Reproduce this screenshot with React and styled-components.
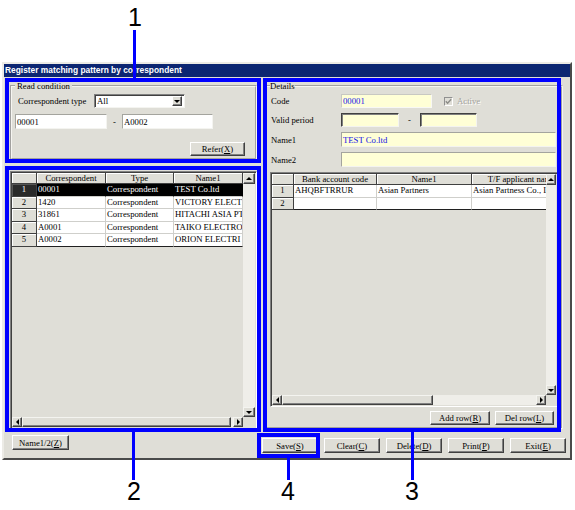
import styled, { createGlobalStyle } from "styled-components";

const FACE = "#dfded7";
const SERIF = `"Liberation Serif", "Times New Roman", serif`;
const SANS = `"Liberation Sans", Arial, sans-serif`;
const BLUE = "#0000ff";
const CREAM = "#ffffd6";

const GlobalStyle = createGlobalStyle`
  html, body { margin: 0; padding: 0; background: #fff; }
  *, *::before, *::after { box-sizing: border-box; }
`;

const leftCols = [
    { w: 25, label: "" },
    { w: 69, label: "Correspondent" },
    { w: 68, label: "Type" },
    { w: 69, label: "Name1" },
];

const leftRows = [
    ["00001", "Correspondent", "TEST Co.ltd"],
    ["1420", "Correspondent", "VICTORY ELECTRIC CO."],
    ["31861", "Correspondent", "HITACHI ASIA PTE"],
    ["A0001", "Correspondent", "TAIKO ELECTRONICS"],
    ["A0002", "Correspondent", "ORION ELECTRI CO."],
];

const rightCols = [
    { w: 22, label: "" },
    { w: 83, label: "Bank account code" },
    { w: 95, label: "Name1" },
    { w: 100, label: "T/F applicant name" },
];

const rightRows = [
    ["AHQBFTRRUR", "Asian Partners", "Asian Partness Co., Ltd"],
    ["", "", ""],
];

export default function App() {
    return (
        <>
            <GlobalStyle />
            <Canvas>
                <Window>
                    <TitleBar>Register matching pattern by correspondent</TitleBar>
                    <Body>
                        <LeftCol>
                            <Group $h={79} $pad="3px 10px 2px 3px">
                                <Legend $pl={2}>Read condition</Legend>
                                <Line $h={14}>
                                    <Label $w={79} $pl={3}>Correspondent type</Label>
                                    <Select>
                                        <span>All</span>
                                        <DropBtn>
                                            <Tri $dir="down" />
                                        </DropBtn>
                                    </Select>
                                </Line>
                                <Line $h={15} $mt={6}>
                                    <TextBox $w={92}>00001</TextBox>
                                    <Dash $w={15}>-</Dash>
                                    <TextBox $w={91}>A0002</TextBox>
                                </Line>
                                <Line $h={14} $mt={13} $end>
                                    <Button $w={55} $h={14}>
                                        Refer(<u>X</u>)
                                    </Button>
                                </Line>
                            </Group>
                            <DataGrid
                                cols={leftCols}
                                rows={leftRows}
                                selected={0}
                                height={258}
                                sb={12}
                                thumb={209}
                            />
                        </LeftCol>

                        <Group $h={348} $pad="3px 3px 2px 4px">
                            <Legend $pl={0}>Details</Legend>
                            <Form>
                                <Line $h={14}>
                                    <Label $w={71} $pl={1}>Code</Label>
                                    <TextBox $w={91} $kind="flat" $bg={CREAM} $color="#1414e6">
                                        00001
                                    </TextBox>
                                    <Check>
                                        <CheckBox>
                                            <svg width="7" height="7" viewBox="0 0 7 7">
                                                <polyline
                                                    points="0.8,3.2 2.6,5.2 6.2,1.2"
                                                    fill="none"
                                                    stroke="#8c8c88"
                                                    strokeWidth="1.4"
                                                />
                                            </svg>
                                        </CheckBox>
                                        <span>Active</span>
                                    </Check>
                                </Line>
                                <Line $h={14}>
                                    <Label $w={71} $pl={1}>Valid period</Label>
                                    <TextBox $w={58} $kind="deep" $bg={CREAM} />
                                    <Dash $w={21}>-</Dash>
                                    <TextBox $w={57} $kind="deep" $bg={CREAM} />
                                </Line>
                                <Line $h={15}>
                                    <Label $w={71} $pl={1}>Name1</Label>
                                    <TextBox $w={215} $bg={CREAM} $color="#1414e6">
                                        TEST Co.ltd
                                    </TextBox>
                                </Line>
                                <Line $h={15}>
                                    <Label $w={71} $pl={1}>Name2</Label>
                                    <TextBox $w={215} $bg={CREAM} />
                                </Line>
                            </Form>
                            <Spacer $h={5} />
                            <DataGrid
                                cols={rightCols}
                                rows={rightRows}
                                selected={-1}
                                height={235}
                                sb={10}
                                thumb={151}
                            />
                            <Line $h={14} $mt={4} $end $gap={5} $pr={4}>
                                <Button $w={60} $h={14}>
                                    Add row(<u>R</u>)
                                </Button>
                                <Button $w={59} $h={14}>
                                    Del row(<u>L</u>)
                                </Button>
                            </Line>
                        </Group>

                        <FootLeft>
                            <Button $w={57} $h={15}>
                                Name1/2(<u>Z</u>)
                            </Button>
                        </FootLeft>
                        <FootRight>
                            <Button $w={56} $h={15}>Save(<u>S</u>)</Button>
                            <Button $w={56} $h={15}>Clear(<u>C</u>)</Button>
                            <Button $w={56} $h={15}>Delete(<u>D</u>)</Button>
                            <Button $w={56} $h={15}>Print(<u>P</u>)</Button>
                            <Button $w={56} $h={15}>Exit(<u>E</u>)</Button>
                        </FootRight>
                    </Body>
                </Window>

                {/* callouts drawn over the screenshot */}
                <Frame $x={5} $y={78} $w={256} $h={85} />
                <Frame $x={5} $y={166} $w={256} $h={266} />
                <Frame $x={263} $y={78} $w={298} $h={354} />
                <Frame $x={257} $y={433} $w={63} $h={25} />
                <Leader $x={133} $y={30} $h={48} />
                <Leader $x={132} $y={432} $h={48} />
                <Leader $x={411} $y={432} $h={48} />
                <Leader $x={287} $y={458} $h={22} />
                <Callout $x={125} $y={5}>1</Callout>
                <Callout $x={124} $y={479}>2</Callout>
                <Callout $x={402} $y={479}>3</Callout>
                <Callout $x={278} $y={479}>4</Callout>
            </Canvas>
        </>
    );
}

function DataGrid({ cols, rows, selected, height, sb, thumb }) {
    return (
        <GridFrame $h={height} $sb={sb}>
            <TableArea>
                <HeadRow>
                    {cols.map((c, i) => (
                        <HeadCell key={i} $w={c.w}>
                            {c.label}
                        </HeadCell>
                    ))}
                </HeadRow>
                {rows.map((r, ri) => {
                    const sel = ri === selected;
                    const last = ri === rows.length - 1;
                    return (
                        <DataRow key={ri}>
                            <RowHead $w={cols[0].w} $sel={sel} $last={last}>
                                {ri + 1}
                            </RowHead>
                            {r.map((v, ci) => (
                                <DataCell key={ci} $w={cols[ci + 1].w} $sel={sel} $last={last}>
                                    {v}
                                </DataCell>
                            ))}
                        </DataRow>
                    );
                })}
            </TableArea>
            <VScroll>
                <ArrowBtn $h={11}>
                    <Tri $dir="up" />
                </ArrowBtn>
                <Track />
                <ArrowBtn $h={10}>
                    <Tri $dir="down" />
                </ArrowBtn>
            </VScroll>
            <HScroll>
                <ArrowBtn $w={10}>
                    <Tri $dir="left" />
                </ArrowBtn>
                <Thumb $w={thumb} />
                <Track />
                <ArrowBtn $w={10}>
                    <Tri $dir="right" />
                </ArrowBtn>
            </HScroll>
            <Corner />
        </GridFrame>
    );
}

const Canvas = styled.div`
    position: relative;
    width: 575px;
    height: 510px;
    padding: 62px 0 0 2px;
    overflow: hidden;
    background: #fff;
`;

const Window = styled.div`
    width: 570px;
    height: 398px;
    display: flex;
    flex-direction: column;
    background: ${FACE};
    border: 2px solid;
    border-color: #ecebe6 #4a4a4a #4a4a4a #ecebe6;
    font-family: ${SERIF};
    font-size: 8.7px;
    color: #000;
`;

const TitleBar = styled.div`
    flex: 0 0 13px;
    height: 13px;
    padding-left: 1px;
    background: #0c2672;
    color: #fff;
    font: bold 8.4px/13px ${SANS};
    white-space: nowrap;
`;

const Body = styled.div`
    flex: 1;
    display: grid;
    grid-template-columns: 247px 299px;
    grid-template-rows: 348px 1fr;
    column-gap: 7px;
    row-gap: 6px;
    padding: 4px 0 0 6px;
`;

const LeftCol = styled.div`
    display: flex;
    flex-direction: column;
    gap: 11px;
`;

const Group = styled.fieldset`
    margin: 0;
    min-width: 0;
    height: ${(p) => p.$h}px;
    padding: ${(p) => p.$pad};
    border: 2px groove #f6f5f1;
    display: flex;
    flex-direction: column;
`;

const Legend = styled.legend`
    padding: 0 ${(p) => p.$pl}px;
    font-size: 8.7px;
    line-height: 10px;
`;

const Form = styled.div`
    display: flex;
    flex-direction: column;
    gap: 5px;
`;

const Spacer = styled.div`
    flex: 0 0 ${(p) => p.$h}px;
`;

const Line = styled.div`
    display: flex;
    align-items: center;
    flex: 0 0 ${(p) => p.$h}px;
    height: ${(p) => p.$h}px;
    margin-top: ${(p) => p.$mt || 0}px;
    justify-content: ${(p) => (p.$end ? "flex-end" : "flex-start")};
    gap: ${(p) => p.$gap || 0}px;
    padding-right: ${(p) => p.$pr || 0}px;
`;

const Label = styled.div`
    flex: 0 0 ${(p) => p.$w}px;
    padding-left: ${(p) => p.$pl}px;
    white-space: nowrap;
`;

const Dash = styled.div`
    flex: 0 0 ${(p) => p.$w}px;
    text-align: center;
`;

const boxBorders = {
    plain: "#a4a49e #f4f4f0 #f4f4f0 #a4a49e",
    flat: "#c8c8c2 #f8f8f4 #f8f8f4 #c8c8c2",
    deep: "#404040 #f4f4f0 #f4f4f0 #404040",
};

const TextBox = styled.div`
    flex: 0 0 ${(p) => p.$w}px;
    height: 100%;
    padding: 0 1px;
    background: ${(p) => p.$bg || "#fff"};
    color: ${(p) => p.$color || "#000"};
    border: 1px solid;
    border-color: ${(p) => boxBorders[p.$kind || "plain"]};
    box-shadow: ${(p) => (p.$kind === "deep" ? "inset 1px 1px #808080" : "none")};
    display: flex;
    align-items: center;
    white-space: nowrap;
    overflow: hidden;
`;

const Select = styled.div`
    flex: 0 0 91px;
    height: 100%;
    padding: 1px 2px 1px 2px;
    background: #fff;
    border: 1px solid;
    border-color: #808080 #f4f4f0 #f4f4f0 #808080;
    box-shadow: inset 1px 1px #404040;
    display: flex;
    align-items: center;
    justify-content: space-between;
`;

const DropBtn = styled.div`
    width: 10px;
    height: 10px;
    background: ${FACE};
    border: 1px solid;
    border-color: #fff #404040 #404040 #fff;
    box-shadow: inset -1px -1px #808080;
    display: flex;
    align-items: center;
    justify-content: center;
`;

const Tri = styled.span`
    width: 0;
    height: 0;
    border: 3px solid transparent;
    ${(p) =>
        ({
            up: "border-bottom-color: #000; border-top-width: 0;",
            down: "border-top-color: #000; border-bottom-width: 0;",
            left: "border-right-color: #000; border-left-width: 0;",
            right: "border-left-color: #000; border-right-width: 0;",
        })[p.$dir]}
`;

const Check = styled.div`
    display: flex;
    align-items: center;
    gap: 4px;
    margin-left: 12px;
    color: #a2a29c;
    text-shadow: 1px 1px #fff;
`;

const CheckBox = styled.div`
    width: 9px;
    height: 9px;
    background: ${FACE};
    border: 1px solid;
    border-color: #909090 #fff #fff #909090;
    display: flex;
    align-items: center;
    justify-content: center;
`;

const Button = styled.div`
    flex: 0 0 ${(p) => p.$w}px;
    width: ${(p) => p.$w}px;
    height: ${(p) => p.$h}px;
    background: ${FACE};
    border: 1px solid;
    border-color: #fff #404040 #404040 #fff;
    box-shadow: inset -1px -1px #808080;
    display: flex;
    align-items: center;
    justify-content: center;
    white-space: nowrap;
`;

const FootLeft = styled.div`
    padding-left: 2px;
`;

const FootRight = styled.div`
    display: flex;
    gap: 6px;
    margin: 3px 0 0 -2px;
`;

/* grid control */
const GridFrame = styled.div`
    flex: 0 0 ${(p) => p.$h}px;
    height: ${(p) => p.$h}px;
    padding: 1px;
    background: ${FACE};
    border: 1px solid;
    border-color: #808080 #fff #fff #808080;
    box-shadow: inset 1px 1px #404040;
    display: grid;
    grid-template-columns: minmax(0, 1fr) ${(p) => p.$sb}px;
    grid-template-rows: minmax(0, 1fr) 10px;
`;

const TableArea = styled.div`
    overflow: hidden;
`;

const HeadRow = styled.div`
    display: flex;
    height: 11px;
`;

const HeadCell = styled.div`
    flex: 0 0 ${(p) => p.$w}px;
    height: 100%;
    border-right: 1px solid #404040;
    border-bottom: 1px solid #404040;
    box-shadow: inset 1px 1px #fff;
    text-align: center;
    line-height: 10px;
    white-space: nowrap;
    overflow: hidden;
`;

const DataRow = styled.div`
    display: flex;
    height: 12.6px;
`;

const RowHead = styled.div`
    flex: 0 0 ${(p) => p.$w}px;
    background: ${(p) => (p.$sel ? "#2a2a2a" : FACE)};
    color: ${(p) => (p.$sel ? "#fff" : "#000")};
    border-right: 1px solid #404040;
    border-bottom: 1px solid #404040;
    box-shadow: inset 1px 1px ${(p) => (p.$sel ? "#555" : "#fff")};
    text-align: center;
    line-height: 11.6px;
`;

const DataCell = styled.div`
    flex: 0 0 ${(p) => p.$w}px;
    padding-left: 1px;
    background: ${(p) => (p.$sel ? "#000" : "#fff")};
    color: ${(p) => (p.$sel ? "#fff" : "#000")};
    border-right: 1px solid ${(p) => (p.$sel ? "#000" : "#cfcfcb")};
    border-bottom: 1px solid ${(p) => (p.$last ? "#202020" : "#cfcfcb")};
    line-height: 11.6px;
    white-space: nowrap;
    overflow: hidden;
`;

const VScroll = styled.div`
    display: flex;
    flex-direction: column;
`;

const HScroll = styled.div`
    display: flex;
`;

const ArrowBtn = styled.div`
    ${(p) => (p.$h ? `flex: 0 0 ${p.$h}px;` : "")}
    ${(p) => (p.$w ? `flex: 0 0 ${p.$w}px;` : "")}
    background: ${FACE};
    border: 1px solid;
    border-color: #f4f4f0 #404040 #404040 #f4f4f0;
    box-shadow: inset -1px -1px #808080;
    display: flex;
    align-items: center;
    justify-content: center;
`;

const Track = styled.div`
    flex: 1;
    background: #efeee9;
`;

const Thumb = styled.div`
    flex: 0 0 ${(p) => p.$w}px;
    background: ${FACE};
    border: 1px solid;
    border-color: #f4f4f0 #404040 #404040 #f4f4f0;
    box-shadow: inset -1px -1px #808080;
`;

const Corner = styled.div`
    background: ${FACE};
`;

/* annotation overlay */
const Frame = styled.div`
    position: absolute;
    left: ${(p) => p.$x}px;
    top: ${(p) => p.$y}px;
    width: ${(p) => p.$w}px;
    height: ${(p) => p.$h}px;
    border: 4px solid ${BLUE};
    pointer-events: none;
`;

const Leader = styled.div`
    position: absolute;
    left: ${(p) => p.$x}px;
    top: ${(p) => p.$y}px;
    width: 3px;
    height: ${(p) => p.$h}px;
    background: ${BLUE};
`;

const Callout = styled.div`
    position: absolute;
    left: ${(p) => p.$x}px;
    top: ${(p) => p.$y}px;
    width: 20px;
    text-align: center;
    font: 25px/25px ${SANS};
    color: #000;
`;
